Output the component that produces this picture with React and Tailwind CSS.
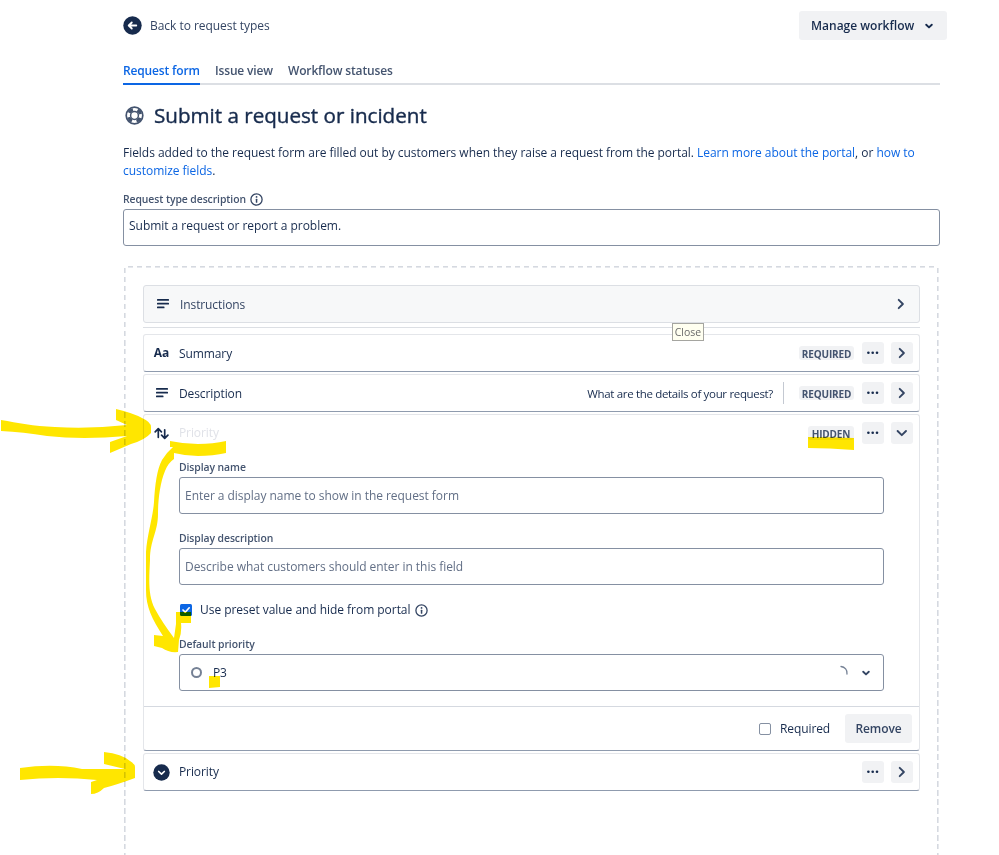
import React from "react";

function Chevron({ dir = "right" }) {
  const d = dir === "right" ? "M8.700 6.800l4.200 4.200-4.200 4.200" : "M6.600 9l4.200 4.200L15 9";
  return (
    <svg width="22" height="22" viewBox="0 0 22 22" fill="none" stroke="#344563" strokeWidth="1.900" strokeLinecap="round" strokeLinejoin="round">
      <path d={d} />
    </svg>
  );
}

function SmallChevron({ color = "#172b4d" }) {
  return (
    <svg width="10" height="10" viewBox="0 0 10 10" fill="none" stroke={color} strokeWidth="1.900" strokeLinecap="round" strokeLinejoin="round">
      <path d="M2.200 3.700l2.800 2.700 2.800-2.700" />
    </svg>
  );
}

function IconButton({ children }) {
  return <button className="flex h-[22px] w-[22px] items-center justify-center rounded-[3px] bg-[#f1f2f4]">{children}</button>;
}

function Dots() {
  return (
    <svg width="22" height="22" viewBox="0 0 22 22" fill="#172b4d">
      <circle cx="6.400" cy="10.800" r="1.300" />
      <circle cx="10.700" cy="10.800" r="1.300" />
      <circle cx="15" cy="10.800" r="1.300" />
    </svg>
  );
}

function Info() {
  return (
    <svg width="13" height="13" viewBox="0 0 13 13" fill="none">
      <circle cx="6.500" cy="6.500" r="5.600" stroke="#344563" strokeWidth="1.300" />
      <rect x="5.800" y="5.700" width="1.500" height="4" rx=".5" fill="#344563" />
      <circle cx="6.550" cy="3.900" r=".9" fill="#344563" />
    </svg>
  );
}

function Lines() {
  return (
    <svg width="12" height="10" viewBox="0 0 12 10" fill="#172b4d">
      <rect x="0" y="0" width="12" height="1.800" rx=".6" />
      <rect x="0" y="3.700" width="12" height="1.800" rx=".6" />
      <rect x="0" y="7.500" width="7.500" height="1.800" rx=".6" />
    </svg>
  );
}

function Arrows() {
  return (
    <svg width="15" height="13" viewBox="0 0 15 13" fill="none" stroke="#172b4d" strokeWidth="1.700" strokeLinecap="round" strokeLinejoin="round">
      <path d="M1.200 4.800L4.300 1.600 7.400 4.800M4.300 2v8.300M7.600 8.200l3.100 3.200 3.200-3.200M10.700 11V2.800" />
    </svg>
  );
}

function Badge({ children, className }) {
  return (
    <span className={"flex h-[14px] items-center justify-center rounded-[3px] bg-[#f1f2f4] pt-px text-[10px] font-bold tracking-[-0.15px] text-[#44546f] " + className}>
      {children}
    </span>
  );
}

const cardFrame = "rounded-[3px] border border-[#e4e6ea] border-b-[#8f9bae] bg-white";
const fieldLabel = "h-[18px] whitespace-nowrap text-[10.4px] font-semibold leading-[17px] tracking-[-0.08px] text-[#44546f]";
const inputBox = "flex h-[37px] items-center rounded-[3px] border border-[#8590a2] px-[5px] tracking-[-0.04px] text-[#626f86]";

function FieldHead({ icon, name, nameClass = "", children, dir = "right" }) {
  return (
    <div className="flex h-[36px] items-center pr-[6px]">
      <span className="flex w-[35px] items-center justify-center">{icon}</span>
      <span className={"whitespace-nowrap tracking-[-0.1px] " + nameClass}>{name}</span>
      <div className="ml-auto flex items-center">
        {children}
        <div className="ml-[8px] flex gap-[7px]">
          <IconButton><Dots /></IconButton>
          <IconButton><Chevron dir={dir} /></IconButton>
        </div>
      </div>
    </div>
  );
}

function Highlights() {
  return (
    <svg className="pointer-events-none absolute left-0 top-0 mix-blend-multiply" width="999" height="855" viewBox="0 0 999 855" fill="#ffe600">
      <path d="M1 420C18 423 33 426 55 427Q90 429 127 425L116 420V409Q133 413 142 418Q151 422 151 427V433Q145 440 131 444L110 453V442L127 436Q82 440 47 436Q23 432 1 431Z" />
      <path d="M170 441Q184 444 198 444Q213 444 226 441V453Q213 456 198 456Q186 456 174 453V459Q168 463 165 471C160 483 158 500 158 514C158 532 150 540 150 560C149 581 148 595 155 609Q162 622 174 638L176 624V612H191V623H181Q182 632 179 640L178 652Q169 653 162 648L154 646V635L163 636C152 619 146 607 146 590V552C147 535 153 517 154 502C155 485 157 469 162 460Q166 453 173 447L170 447Z" />
      <path d="M808 437Q832 437 854 438V450Q829 448 808 448Z" />
      <path d="M209 676H220V687L209 688Z" />
      <path d="M20 768Q54 763 82 769L125 769L104 764V752Q122 754 130 761Q135 764 135 767V778Q116 785 104 788Q98 794 91 794V782L97 780Q58 776 20 780Z" />
    </svg>
  );
}

export default function App() {
  return (
    <div className="relative h-[855px] w-[999px] overflow-hidden bg-white font-['Open_Sans',sans-serif] text-[12px] leading-[18px] text-[#172b4d]">
      <main className="ml-[123px] flex w-[817px] flex-col">
        <header className="mr-[-7px] flex h-[51px] items-center">
          <svg width="19" height="19" viewBox="0 0 19 19" fill="none">
            <circle cx="9.500" cy="9.500" r="9.200" fill="#172b4d" />
            <path d="M13.300 9.500H6M8.800 6.500L5.700 9.500l3.100 3" stroke="#fff" strokeWidth="1.800" strokeLinecap="round" strokeLinejoin="round" />
          </svg>
          <span className="ml-[8px] whitespace-nowrap tracking-[-0.04px] text-[#344563]">Back to request types</span>
          <button className="ml-auto flex h-[29px] w-[148px] items-center rounded-[3px] bg-[#f1f2f4] pl-[12px] font-semibold">
            <span className="whitespace-nowrap">Manage workflow</span>
            <span className="ml-auto mr-[13px]"><SmallChevron /></span>
          </button>
        </header>

        <nav className="mt-[10px] flex h-[24px] gap-[15px] border-b-2 border-[#dcdfe4] font-semibold leading-[20px] tracking-[-0.15px] text-[#44546f]">
          <span className="h-[24px] w-[77px] whitespace-nowrap border-b-2 border-[#0c66e4] text-[#0c66e4]">Request form</span>
          <span className="w-[58px] whitespace-nowrap">Issue view</span>
          <span className="whitespace-nowrap">Workflow statuses</span>
        </nav>

        <h1 className="mt-[15px] flex h-[30px] items-center text-[20.6px]">
          <svg className="ml-[2px] mr-[10px]" width="19" height="19" viewBox="0 0 19 19" fill="none">
            <circle cx="9.500" cy="9.500" r="8.300" stroke="#44546f" strokeWidth="1.700" />
            <circle cx="9.500" cy="9.500" r="6.100" stroke="#44546f" strokeWidth="3.200" strokeDasharray="4.790 4.790" strokeDashoffset="-2.400" />
            <circle cx="9.500" cy="9.500" r="3.900" stroke="#44546f" strokeWidth="1.500" />
          </svg>
          <span className="whitespace-nowrap [-webkit-text-stroke:0.4px_#172b4d]">Submit a request or incident</span>
        </h1>

        <p className="mt-[14px] tracking-[-0.035px]">
          <span className="block whitespace-nowrap">Fields added to the request form are filled out by customers when they raise a request from the portal. <a className="text-[#0c66e4]">Learn more about the portal</a>, or <a className="text-[#0c66e4]">how to</a></span>
          <span className="block"><a className="text-[#0c66e4]">customize fields</a>.</span>
        </p>

        <label className="mt-[10px] flex h-[18px] items-center gap-[4px] text-[10.4px] font-semibold tracking-[-0.08px] text-[#44546f]">
          <span className="whitespace-nowrap">Request type description</span><Info />
        </label>
        <div className="mt-[1px] h-[37px] rounded-[3px] border border-[#8590a2] px-[5px] pt-[7px] tracking-[-0.03px]">Submit a request or report a problem.</div>

        <section className="mt-[20px] flex h-[620px] flex-col bg-no-repeat px-[20px] pt-[19px] bg-[linear-gradient(#fff,#fff),linear-gradient(#fff,#fff),repeating-linear-gradient(90deg,transparent_0_4px,#d5d9e0_4px_9px),repeating-linear-gradient(#d5d9e0_0_5.500px,transparent_5.500px_9px),repeating-linear-gradient(#d5d9e0_0_5.500px,transparent_5.500px_9px)] [background-position:0_0,100%_0,1px_0,1px_2px,calc(100%_-_1px)_2px] [background-size:3px_2px,3px_2px,calc(100%_-_2px)_1.600px,1.600px_100%,1.600px_100%]">
          <div className="flex h-[38px] items-center rounded-[3px] border border-[#dcdfe4] bg-[#f7f8f9] pl-[13px] pr-[7px]">
            <Lines />
            <span className="ml-[11px] pt-px tracking-[-0.1px] text-[#344563]">Instructions</span>
            <span className="ml-auto"><Chevron /></span>
          </div>
          <div className="mt-[4px] h-px bg-[#dcdfe4]" />

          <div className="mt-[6px] flex flex-col gap-[2px]">
            <div className={cardFrame}>
              <FieldHead icon={<b className="text-[12px]">Aa</b>} name="Summary" nameClass="pt-px">
                <Badge className="w-[55px]">REQUIRED</Badge>
              </FieldHead>
            </div>
            <div className={cardFrame}>
              <FieldHead icon={<Lines />} name="Description" nameClass="pt-px">
                <span className="mr-[10px] whitespace-nowrap pt-px text-[11.5px] tracking-[-0.33px]">What are the details of your request?</span>
                <span className="mr-[15px] h-[22px] w-px bg-[#c4c9d2]" />
                <Badge className="w-[55px]">REQUIRED</Badge>
              </FieldHead>
            </div>
            <div className={cardFrame}>
              <FieldHead icon={<Arrows />} name="Priority" nameClass="text-[#e0e2e8]" dir="down">
                <Badge className="w-[46px]">HIDDEN</Badge>
              </FieldHead>
              <div className="flex h-[255px] flex-col px-[35px] pt-[8px]">
                <label className={fieldLabel}>Display name</label>
                <div className={inputBox}>Enter a display name to show in the request form</div>
                <label className={"mt-[16px] " + fieldLabel}>Display description</label>
                <div className={inputBox}>Describe what customers should enter in this field</div>
                <div className="mt-[16px] flex h-[18px] items-center">
                  <svg width="14" height="14" viewBox="0 0 14 14" fill="none">
                    <rect x="1" y="1" width="12" height="12" rx="1.500" fill="#0c66e4" />
                    <path d="M4 7l2.200 2.200 4-4.400" stroke="#fff" strokeWidth="1.700" strokeLinecap="round" strokeLinejoin="round" />
                  </svg>
                  <span className="ml-[7px] mr-[5px] whitespace-nowrap tracking-[-0.04px]">Use preset value and hide from portal</span>
                  <Info />
                </div>
                <label className={"mt-[17px] " + fieldLabel}>Default priority</label>
                <div className="flex h-[37px] shrink-0 items-center rounded-[3px] border border-[#8590a2] pl-[11px] pr-[12px]">
                  <span className="h-[11px] w-[11px] rounded-full border-2 border-[#758195]" />
                  <span className="ml-[11px] tracking-[-0.3px]">P3</span>
                  <svg className="ml-auto" width="16" height="16" viewBox="0 0 16 16" fill="none">
                    <path d="M8 1.500a6.500 6.500 0 0 1 6 7.500" stroke="#758195" strokeWidth="1.300" strokeLinecap="round" />
                  </svg>
                  <span className="ml-[12px]"><SmallChevron color="#344563" /></span>
                </div>
              </div>
              <div className="flex h-[44px] items-center border-t border-[#d5d9e0] pr-[7px]">
                <span className="ml-auto h-[12px] w-[12px] rounded-[2px] border border-[#8590a2]" />
                <span className="ml-[9px] w-[65px] tracking-[-0.1px]">Required</span>
                <button className="h-[29px] w-[67px] rounded-[3px] bg-[#f1f2f4] font-semibold tracking-[-0.1px] text-[#344563]">Remove</button>
              </div>
            </div>
            <div className={cardFrame}>
              <FieldHead
                icon={
                  <svg width="17" height="17" viewBox="0 0 17 17" fill="none">
                    <circle cx="8.500" cy="8.500" r="8.200" fill="#172b4d" />
                    <path d="M5.700 7.500l2.800 2.600 2.800-2.600" stroke="#fff" strokeWidth="1.700" strokeLinecap="round" strokeLinejoin="round" />
                  </svg>
                }
                name="Priority"
              />
            </div>
          </div>
        </section>
      </main>

      <div className="absolute left-[672px] top-[323px] flex h-[18px] w-[32px] items-center justify-center border border-[#a5a5a0] bg-[#fffff0] text-[10.500px] text-[#6b6b6b]">Close</div>
      <Highlights />
    </div>
  );
}
